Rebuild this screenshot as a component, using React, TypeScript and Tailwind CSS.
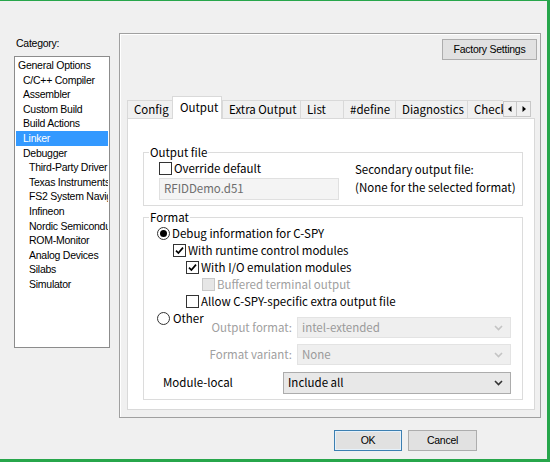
import React from 'react';

const ui = "font-['Noto_Sans_CJK_SC','Noto_Sans',sans-serif] text-[11.5px]";
const tah = "font-['Liberation_Sans',Arial,sans-serif] text-[10.5px] tracking-[-0.25px]";

function Check({ checked = false, disabled = false }: { checked?: boolean; disabled?: boolean }) {
  return (
    <span
      className={
        'inline-flex w-[13px] h-[13px] shrink-0 items-center justify-center border ' +
        (disabled ? 'border-[#c8c8c8] bg-[#e6e6e6]' : 'border-[#333333] bg-white')
      }
    >
      {checked && (
        <svg width="9" height="9" viewBox="0 0 9 9">
          <path d="M1 4.6 L3.4 7 L8 1.6" stroke="#000" strokeWidth="1.7" fill="none" />
        </svg>
      )}
    </span>
  );
}

function Radio({ checked = false }: { checked?: boolean }) {
  return (
    <span className="inline-flex w-[13px] h-[13px] shrink-0 items-center justify-center rounded-full border border-[#333333] bg-white">
      {checked && <span className="w-[7px] h-[7px] rounded-full bg-black" />}
    </span>
  );
}

function Chevron({ color }: { color: string }) {
  return (
    <svg width="9" height="6" viewBox="0 0 9 6">
      <path d="M1 1 L4.5 4.5 L8 1" stroke={color} strokeWidth="1.6" fill="none" />
    </svg>
  );
}

function Select({ value, disabled, cls }: { value: string; disabled?: boolean; cls: string }) {
  return (
    <div
      className={
        cls +
        ' flex items-center justify-between pl-[4px] pr-[7px] border ' +
        (disabled ? 'border-[#e3e3e3] bg-[#efefef] text-[#9a9a9a]' : 'border-[#acacac] bg-[#e8e8e8] text-black')
      }
    >
      <span className="whitespace-nowrap">{value}</span>
      <Chevron color={disabled ? '#c4c4c4' : '#333'} />
    </div>
  );
}

const tabs: { label: string; w: string; sel?: boolean }[] = [
  { label: 'Config', w: 'w-[45px]' },
  { label: 'Output', w: 'w-[50px]', sel: true },
  { label: 'Extra Output', w: 'w-[78px]' },
  { label: 'List', w: 'w-[43px]' },
  { label: '#define', w: 'w-[52px]' },
  { label: 'Diagnostics', w: 'w-[72px]' },
  { label: 'Checksum', w: 'w-[60px]' },
];

const cats: { label: string; indent: string; sel?: boolean }[] = [
  { label: 'General Options', indent: 'pl-[2px]' },
  { label: 'C/C++ Compiler', indent: 'pl-[7px]' },
  { label: 'Assembler', indent: 'pl-[7px]' },
  { label: 'Custom Build', indent: 'pl-[7px]' },
  { label: 'Build Actions', indent: 'pl-[7px]' },
  { label: 'Linker', indent: 'pl-[7px]', sel: true },
  { label: 'Debugger', indent: 'pl-[7px]' },
  { label: 'Third-Party Driver', indent: 'pl-[13px]' },
  { label: 'Texas Instruments', indent: 'pl-[13px]' },
  { label: 'FS2 System Navigator', indent: 'pl-[13px]' },
  { label: 'Infineon', indent: 'pl-[13px]' },
  { label: 'Nordic Semiconductor', indent: 'pl-[13px]' },
  { label: 'ROM-Monitor', indent: 'pl-[13px]' },
  { label: 'Analog Devices', indent: 'pl-[13px]' },
  { label: 'Silabs', indent: 'pl-[13px]' },
  { label: 'Simulator', indent: 'pl-[13px]' },
];

export default function App() {
  return (
    <div className="w-[550px] h-[462px] bg-[#f0f0f0] border-t border-r-[3px] border-b-[3px] border-[#27a64b] flex flex-col overflow-hidden text-black">
      <div className="flex items-start">
        {/* Left column */}
        <div className="ml-[14px] w-[96px] flex flex-col">
          <div className={tah + ' mt-[35px] leading-[14px] pl-[2px]'}>Category:</div>
          <div className={tah + ' mt-[6px] h-[292px] border border-[#8c8c8c] bg-white pt-[1px] overflow-hidden'}>
            {cats.map((c) => (
              <div
                key={c.label}
                className={
                  'h-[14.6px] leading-[14.6px] whitespace-nowrap overflow-hidden mx-[1px] ' +
                  c.indent +
                  (c.sel ? ' bg-[#3399ff] text-white' : '')
                }
              >
                {c.label}
              </div>
            ))}
          </div>
        </div>

        {/* Right panel */}
        <div className="ml-[9px] mt-[32px] w-[422px] h-[385px] border border-[#a0a0a0] shadow-[inset_1px_1px_0_#ffffff] flex flex-col">
          <div className="self-end mr-[3px] mt-[5px] w-[95px] h-[21px] border border-[#adadad] bg-[#e1e1e1] flex items-center justify-center">
            <span className={tah}>Factory Settings</span>
          </div>

          {/* Tabs */}
          <div className={ui + ' ml-[7px] mt-[36px] h-[23px] -mb-px relative z-10 flex items-end'}>
            <div className="w-[376px] h-[23px] flex items-end overflow-hidden">
              {tabs.map((t) =>
                t.sel ? (
                  <div
                    key={t.label}
                    className={t.w + ' shrink-0 h-[23px] bg-white border border-b-0 border-[#d9d9d9] pl-[7px] leading-[20px] whitespace-nowrap'}
                  >
                    {t.label}
                  </div>
                ) : (
                  <div
                    key={t.label}
                    className={t.w + ' shrink-0 h-[19px] bg-[#f0f0f0] border-t border-l border-b border-[#d9d9d9] pl-[6px] leading-[17px] whitespace-nowrap overflow-hidden'}
                  >
                    {t.label}
                  </div>
                )
              )}
            </div>
            <div className="flex mb-[2px]">
              <div className="w-[14px] h-[16px] border border-[#c8c8c8] bg-[#f0f0f0] flex items-center justify-center">
                <svg width="4" height="6" viewBox="0 0 4 6"><path d="M3.5 0 L0 3 L3.5 6 Z" fill="#000" /></svg>
              </div>
              <div className="w-[14px] h-[16px] border border-l-0 border-[#c8c8c8] bg-[#f0f0f0] flex items-center justify-center">
                <svg width="4" height="6" viewBox="0 0 4 6"><path d="M0.5 0 L4 3 L0.5 6 Z" fill="#000" /></svg>
              </div>
            </div>
          </div>

          {/* Tab content */}
          <div className={ui + ' ml-[7px] w-[408px] h-[292px] border border-[#d9d9d9] bg-white flex flex-col'}>
            {/* Output file */}
            <fieldset className="ml-[15px] mr-[11px] mt-[25px] border border-[#dcdcdc] pb-[5px]">
              <legend className="ml-[5px] px-[1px] leading-[16px]">Output file</legend>
              <div className="flex pl-[15px]">
                <div className="w-[180px] shrink-0 flex flex-col">
                  <div className="h-[17px] flex items-center gap-[2px]">
                    <Check />
                    <span>Override default</span>
                  </div>
                  <div className="mt-[1px] h-[22px] border border-[#e0e0e0] bg-[#f4f4f4] flex items-center pl-[4px] text-[#6d6d6d]">
                    RFIDDemo.d51
                  </div>
                </div>
                <div className="ml-[16px] flex flex-col leading-[18px] whitespace-nowrap overflow-hidden">
                  <span>Secondary output file:</span>
                  <span>(None for the selected format)</span>
                </div>
              </div>
            </fieldset>

            {/* Format */}
            <fieldset className="ml-[15px] mr-[11px] mt-[3px] border border-[#dcdcdc] pb-[5px]">
              <legend className="ml-[5px] px-[1px] leading-[16px]">Format</legend>
              <div className="h-[17px] flex items-center gap-[2px] pl-[13px]">
                <Radio checked />
                <span>Debug information for C-SPY</span>
              </div>
              <div className="h-[17px] flex items-center gap-[2px] pl-[29px]">
                <Check checked />
                <span>With runtime control modules</span>
              </div>
              <div className="h-[17px] flex items-center gap-[2px] pl-[42px]">
                <Check checked />
                <span>With I/O emulation modules</span>
              </div>
              <div className="h-[17px] flex items-center gap-[2px] pl-[58px]">
                <Check disabled />
                <span className="text-[#a0a0a0]">Buffered terminal output</span>
              </div>
              <div className="h-[17px] flex items-center gap-[2px] pl-[42px]">
                <Check />
                <span>Allow C-SPY-specific extra output file</span>
              </div>
              <div className="flex items-start">
                <div className="h-[17px] flex items-center gap-[3px] pl-[13px]">
                  <Radio />
                  <span>Other</span>
                </div>
                <div className="ml-auto mr-[11px] pt-[7px] flex flex-col gap-[6px]">
                  <div className="flex items-center justify-end gap-[5px]">
                    <span className="text-[#a0a0a0]">Output format:</span>
                    <Select cls="w-[214px] h-[21px]" value="intel-extended" disabled />
                  </div>
                  <div className="flex items-center justify-end gap-[5px]">
                    <span className="text-[#a0a0a0]">Format variant:</span>
                    <Select cls="w-[214px] h-[21px]" value="None" disabled />
                  </div>
                </div>
              </div>
              <div className="mt-[7px] flex items-center pl-[19px] pr-[11px]">
                <span>Module-local</span>
                <Select cls="ml-auto w-[228px] h-[22px]" value="Include all" />
              </div>
            </fieldset>
          </div>
        </div>
      </div>

      {/* Bottom buttons */}
      <div className="mt-[12px] flex justify-end pr-[70px] gap-[6px]">
        <div className="w-[68px] h-[21px] border border-[#3c7fb1] shadow-[inset_0_0_0_1px_#e5f1fb] bg-[#e1e1e1] flex items-center justify-center">
          <span className={tah}>OK</span>
        </div>
        <div className="w-[69px] h-[21px] border border-[#adadad] bg-[#e1e1e1] flex items-center justify-center">
          <span className={tah}>Cancel</span>
        </div>
      </div>
    </div>
  );
}
